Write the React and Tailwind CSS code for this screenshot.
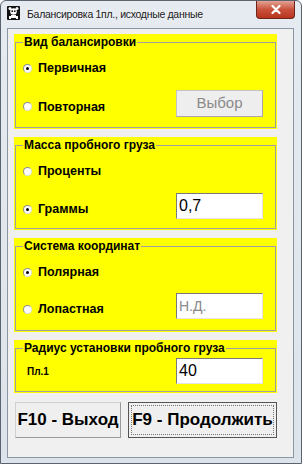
import React from "react";

const font = "font-['Liberation_Sans',Arial,sans-serif]";

function Radio({ checked, label, className = "" }) {
  return (
    <div className={`flex items-center gap-[6px] ${className}`}>
      <span className="w-[9px] h-[9px] rounded-full bg-white border border-[#8f8f8f] border-b-[#dcdcdc] border-r-[#dcdcdc] flex items-center justify-center">
        {checked && <span className="w-[3px] h-[3px] rounded-full bg-black"></span>}
      </span>
      <span className="text-[12.5px] leading-[14px] font-bold text-black">{label}</span>
    </div>
  );
}

function Field({ value, muted, size = "text-[16px]" }) {
  return (
    <div
      className={`w-[87px] h-[26px] bg-white border border-t-[#7a7a7a] border-l-[#7a7a7a] border-b-[#e3e3e3] border-r-[#e3e3e3] flex items-center pl-[2px] ${size} ${
        muted ? "text-[#8a8a8a]" : "text-black"
      }`}
    >
      {value}
    </div>
  );
}

function Group({ title, children, className = "" }) {
  return (
    <div className="w-[263px] bg-[#ffff00] p-[1px]">
      <fieldset className="border border-[#a0a0a0]">
        <legend className="ml-[7px] px-[1px] text-[12px] leading-[14px] font-bold text-black">
          {title}
        </legend>
        <div className={className}>{children}</div>
      </fieldset>
    </div>
  );
}

function PandaIcon() {
  return (
    <svg width="13" height="14" viewBox="0 0 13 14">
      <rect x="0" y="0" width="13" height="14" rx="1" fill="#111" />
      <circle cx="6.5" cy="5.5" r="3.3" fill="#fff" />
      <circle cx="3" cy="2.5" r="1.5" fill="#fff" />
      <circle cx="10" cy="2.5" r="1.5" fill="#fff" />
      <circle cx="5.2" cy="5.2" r="0.9" fill="#111" />
      <circle cx="7.8" cy="5.2" r="0.9" fill="#111" />
      <rect x="4" y="9" width="5" height="3" fill="#fff" />
      <rect x="2" y="10" width="2" height="3" fill="#fff" />
      <rect x="9" y="10" width="2" height="3" fill="#fff" />
    </svg>
  );
}

export default function App() {
  return (
    <div className={`w-[302px] h-[464px] ${font}`}>
      <div className="w-full h-full flex flex-col border border-[#5b636e] rounded-t-[6px] bg-gradient-to-b from-[#e6ebf1] to-[#dde3ea]">
        {/* title bar */}
        <div className="h-[27px] flex items-start shrink-0">
          <div className="ml-[6px] mt-[5px]">
            <PandaIcon />
          </div>
          <span className="ml-[7px] mt-[6px] text-[10.5px] leading-[14px] tracking-[-0.3px] text-[#1a1a1a] [text-shadow:0_0_5px_#fff]">
            Балансировка 1пл., исходные данные
          </span>
          <div className="ml-auto mr-[6px] w-[39px] h-[18px] rounded-b-[4px] border border-t-0 border-[#6e2418] bg-gradient-to-b from-[#e3a293] via-[#c9513c] to-[#b8341d] flex items-center justify-center">
            <svg width="10" height="9" viewBox="0 0 10 9">
              <path d="M1.5 1 L8.5 8 M8.5 1 L1.5 8" stroke="#fff" strokeWidth="2.2" strokeLinecap="round" />
            </svg>
          </div>
        </div>

        {/* client area */}
        <div className="flex-1 ml-[6px] mr-[7px] mb-[5px] border border-[#8a96a4] bg-[#f0f0f0] pt-[5px] pl-[6px] flex flex-col">
          <Group title="Вид балансировки" className="pt-[6px] pb-[10px] pl-[7px] pr-[12px]">
            <div className="h-[26px] flex items-center">
              <Radio checked label="Первичная" />
            </div>
            <div className="mt-[9px] h-[27px] flex items-center justify-between">
              <Radio label="Повторная" className="mt-[6px]" />
              <div className="w-[87px] h-[27px] bg-[#eeeeee] border border-[#c4c4c4] border-b-[#a8a8a8] border-r-[#a8a8a8] flex items-center justify-center text-[15px] text-[#8a8a8a]">
                Выбор
              </div>
            </div>
          </Group>

          <div className="mt-[8px]">
            <Group title="Масса пробного груза" className="pt-[6px] pb-[9px] pl-[7px] pr-[12px]">
              <div className="h-[26px] flex items-center">
                <Radio label="Проценты" />
              </div>
              <div className="mt-[9px] h-[26px] flex items-center justify-between">
                <Radio checked label="Граммы" className="mt-[6px]" />
                <Field value="0,7" />
              </div>
            </Group>
          </div>

          <div className="mt-[8px]">
            <Group title="Система координат" className="pt-[6px] pb-[11px] pl-[7px] pr-[12px]">
              <div className="h-[26px] flex items-center">
                <Radio checked label="Полярная" />
              </div>
              <div className="mt-[8px] h-[26px] flex items-center justify-between">
                <Radio label="Лопастная" className="mt-[6px]" />
                <Field value="Н.Д." muted size="text-[14px]" />
              </div>
            </Group>
          </div>

          <div className="mt-[8px]">
            <Group title="Радиус установки пробного груза" className="pt-[3px] pb-[7px] pl-[11px] pr-[12px]">
              <div className="h-[26px] flex items-center justify-between">
                <span className="text-[10px] font-bold text-black mt-[1px]">Пл.1</span>
                <Field value="40" />
              </div>
            </Group>
          </div>

          <div className="mt-[9px] ml-[1px] flex gap-[7px]">
            <div className="w-[106px] h-[36px] bg-[#efefef] border border-[#d0d0d0] border-b-[#9a9a9a] border-r-[#9a9a9a] flex items-center justify-center text-[17px] font-bold text-black">
              F10 - Выход
            </div>
            <div className="w-[149px] h-[36px] bg-[#efefef] border border-[#555555] p-[2px]">
              <div className="w-full h-full border border-dotted border-[#777777] flex items-center justify-center text-[17px] font-bold text-black">
                F9 - Продолжить
              </div>
            </div>
          </div>
        </div>
      </div>
    </div>
  );
}
